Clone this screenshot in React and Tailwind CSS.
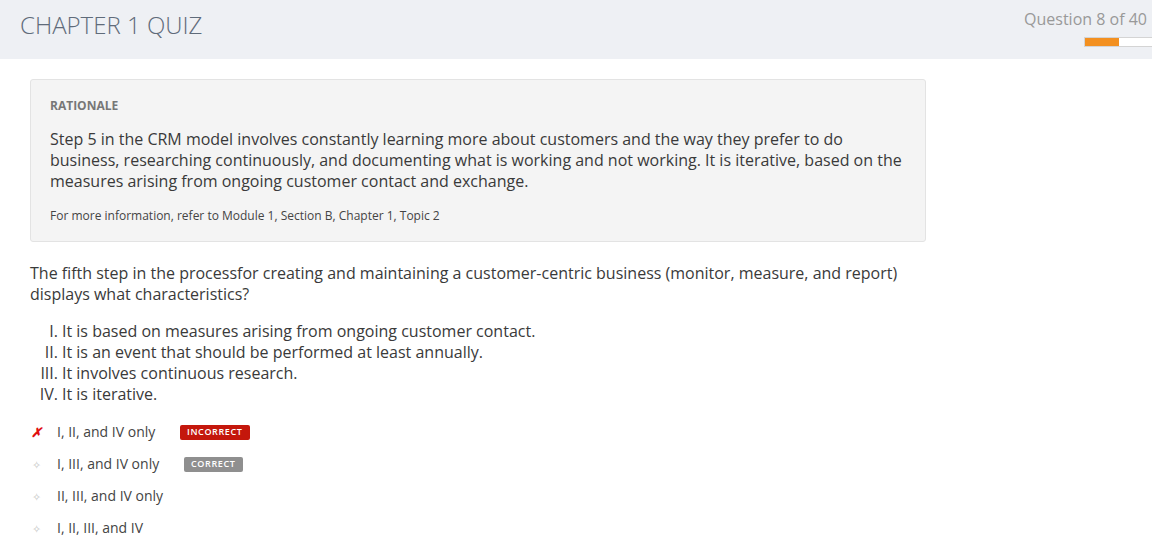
import React from 'react';

const statements = [
  ['I.', 'It is based on measures arising from ongoing customer contact.'],
  ['II.', 'It is an event that should be performed at least annually.'],
  ['III.', 'It involves continuous research.'],
  ['IV.', 'It is iterative.'],
];

const options = [
  { text: 'I, II, and IV only', mark: 'wrong', badge: 'INCORRECT' },
  { text: 'I, III, and IV only', badge: 'CORRECT' },
  { text: 'II, III, and IV only' },
  { text: 'I, II, III, and IV' },
];

const App = () => {
  return (
    <div className="min-h-[558px] bg-white text-[#333]" style={{ fontFamily: '"Open Sans", "Noto Sans", sans-serif' }}>
      {/* header */}
      <div className="h-[59px] bg-[#eef0f4] flex justify-between">
        <h1 className="pl-5 pt-[9px] text-[24px] leading-[32px] font-light text-[#5f6b7a]">CHAPTER 1 QUIZ</h1>
        <div className="flex flex-col items-end pt-[8px]">
          <div className="text-[16px] leading-[22px] text-[#999] pr-[5px]">Question 8 of 40</div>
          <div className="mt-[7px] w-[68px] h-[10px] bg-white border border-[#d4d4d4] border-r-0">
            <div className="h-full w-[34px] bg-[#f39020]" />
          </div>
        </div>
      </div>

      <div className="pl-[30px] pt-[20px] w-[926px]">
        {/* rationale */}
        <div className="bg-[#f4f4f4] border border-[#e3e3e3] rounded-[3px] px-[19px] pt-[18px] pb-[18px] h-[163px]">
          <div className="text-[12px] leading-[16px] font-bold text-[#777]">RATIONALE</div>
          <p className="mt-[15px] text-[16px] leading-[21px] text-[#3a3a3a]">
            Step 5 in the CRM model involves constantly learning more about customers and the way they prefer to do business, researching continuously, and documenting what is working and not working. It is iterative, based on the measures arising from ongoing customer contact and exchange.
          </p>
          <p className="mt-[16px] text-[12px] leading-[16px] text-[#444]">
            For more information, refer to Module 1, Section B, Chapter 1, Topic 2
          </p>
        </div>

        {/* question */}
        <p className="mt-[21px] text-[16px] leading-[21px] text-[#3a3a3a] w-[880px]">
          The fifth step in the processfor creating and maintaining a customer-centric business (monitor, measure, and report) displays what characteristics?
        </p>
        <div className="mt-[16px] text-[16px] leading-[21px] text-[#3a3a3a]">
          {statements.map(([n, t]) => (
            <div key={n} className="flex">
              <span className="w-[28px] text-right">{n}</span>
              <span className="ml-[4px]">{t}</span>
            </div>
          ))}
        </div>

        {/* options */}
        <div className="mt-[11px]">
          {options.map((o) => (
            <div key={o.text} className="flex items-center h-[32px]">
              <span className="w-[27px] flex justify-start pl-[1px]">
                {o.mark === 'wrong' ? (
                  <span className="text-[#e01010] text-[13px] font-bold italic leading-none">✗</span>
                ) : (
                  <span className="text-[#c4c4c4] text-[11px] leading-none pl-[1px]">✧</span>
                )}
              </span>
              <span className="text-[14px] leading-[20px] text-[#444] w-[124px]">{o.text}</span>
              {o.badge === 'INCORRECT' && (
                <span className="ml-[-1px] h-[15px] px-[7px] bg-[#c4170c] text-white text-[9px] font-semibold tracking-[0.07em] rounded-[2px] flex items-center">INCORRECT</span>
              )}
              {o.badge === 'CORRECT' && (
                <span className="ml-[3px] h-[15px] px-[7px] bg-[#8f8f8f] text-white text-[9px] font-semibold tracking-[0.07em] rounded-[2px] flex items-center">CORRECT</span>
              )}
            </div>
          ))}
        </div>
      </div>
    </div>
  );
};

export default App;
